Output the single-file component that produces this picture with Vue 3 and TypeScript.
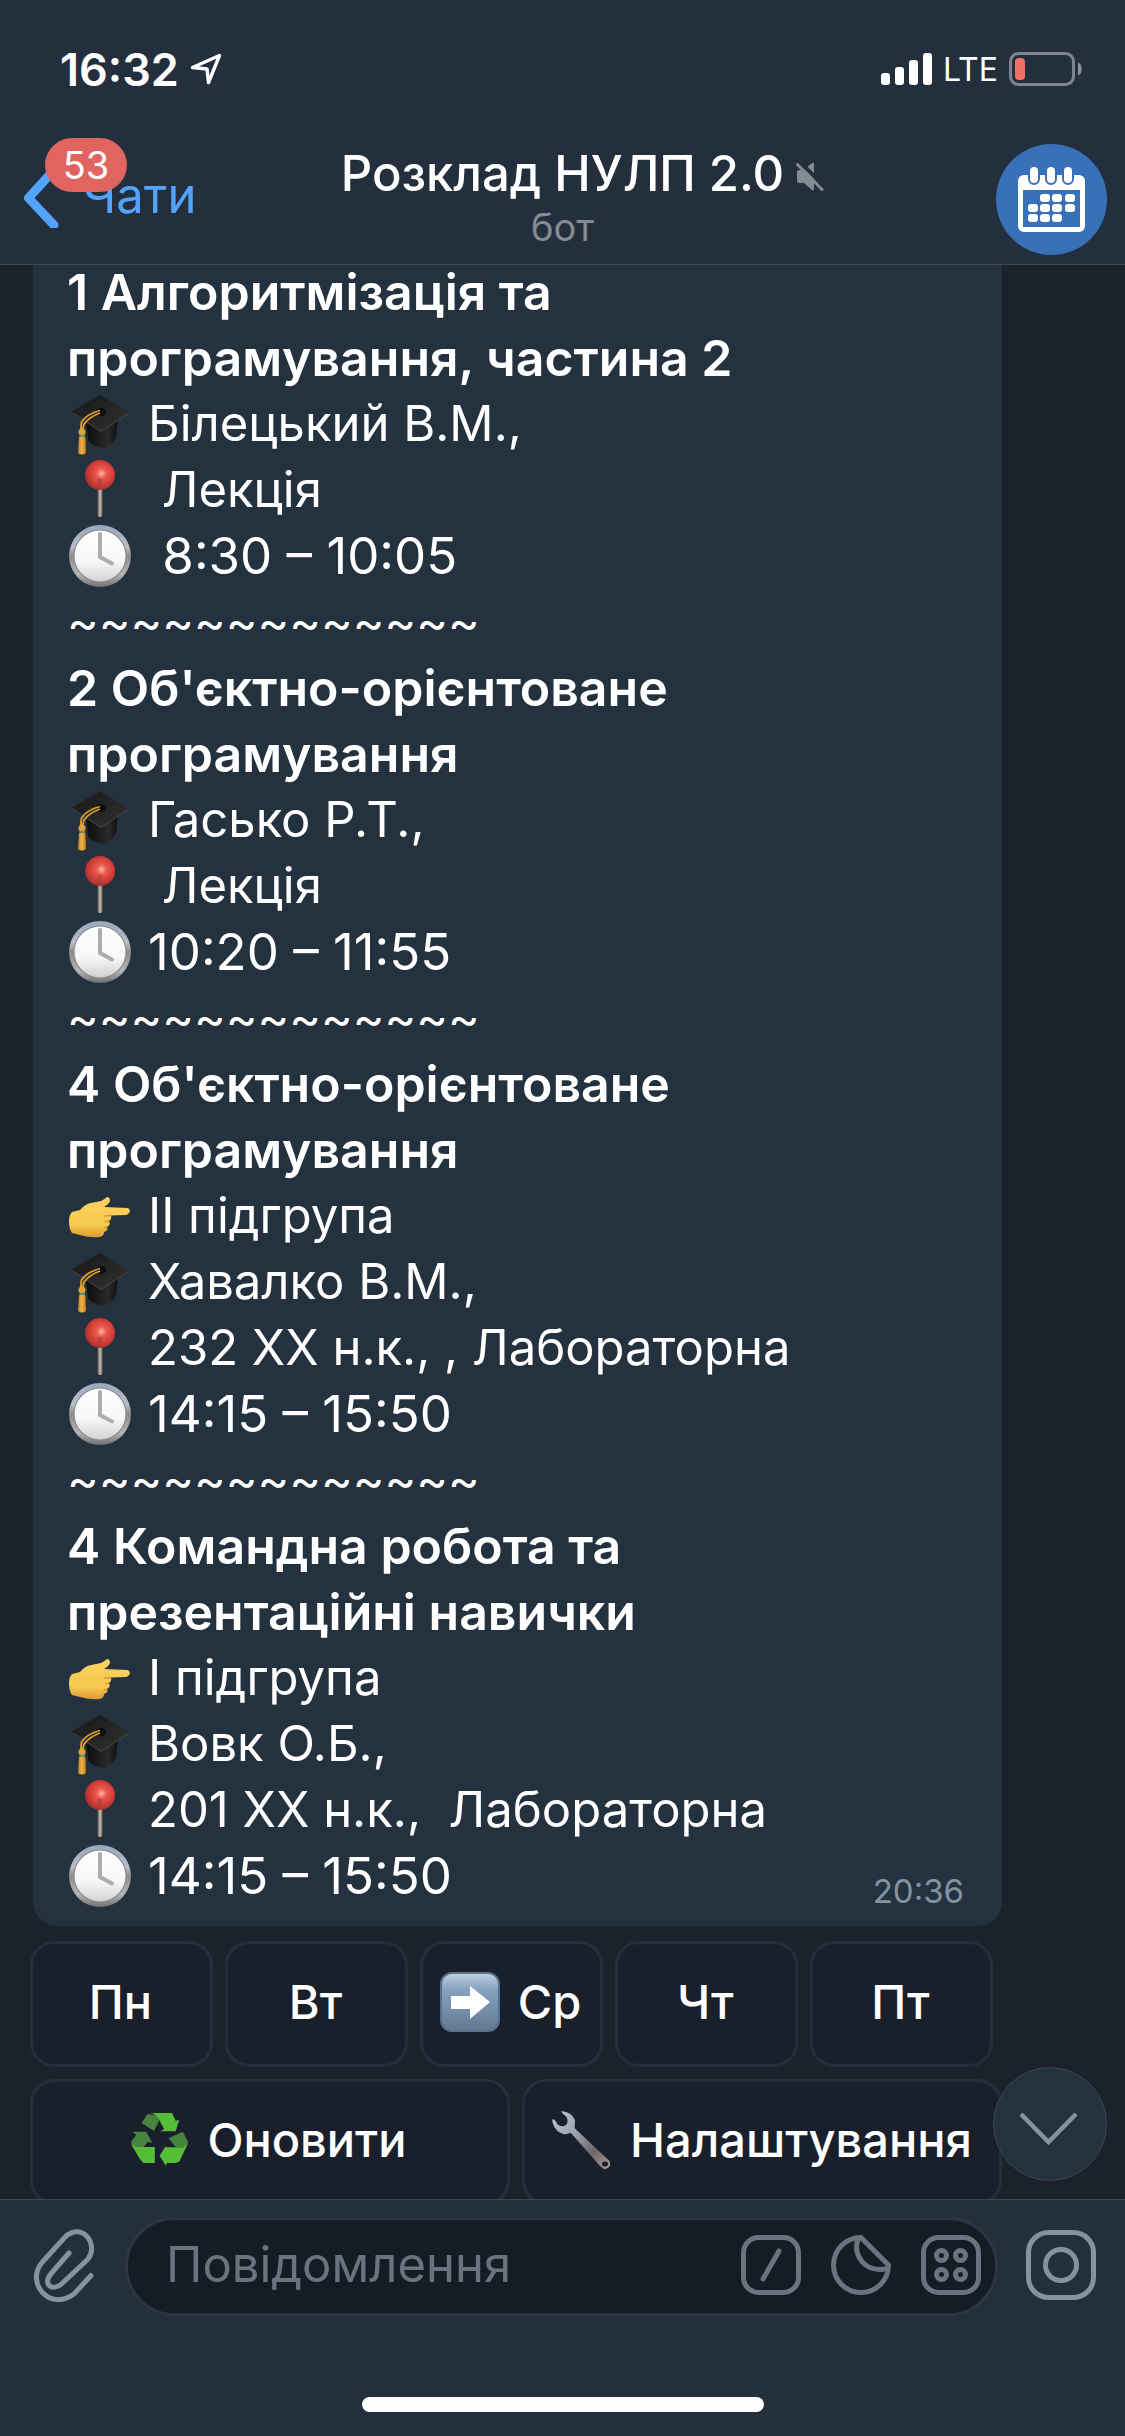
<script setup lang="ts">
import { ref } from 'vue'

type IconName = 'hand' | 'cap' | 'pin' | 'clock'

interface Row {
  icon: IconName
  text: string
}

interface Lesson {
  title: string[]
  rows: Row[]
}

const lessons: Lesson[] = [
  {
    title: ['1 Алгоритмізація та', 'програмування, частина 2'],
    rows: [
      { icon: 'cap', text: 'Білецький В.М.,' },
      { icon: 'pin', text: ' Лекція' },
      { icon: 'clock', text: ' 8:30 – 10:05' },
    ],
  },
  {
    title: ["2 Об'єктно-орієнтоване", 'програмування'],
    rows: [
      { icon: 'cap', text: 'Гасько Р.Т.,' },
      { icon: 'pin', text: ' Лекція' },
      { icon: 'clock', text: '10:20 – 11:55' },
    ],
  },
  {
    title: ["4 Об'єктно-орієнтоване", 'програмування'],
    rows: [
      { icon: 'hand', text: 'ІІ підгрупа' },
      { icon: 'cap', text: 'Хавалко В.М.,' },
      { icon: 'pin', text: '232 ХХ н.к., , Лабораторна' },
      { icon: 'clock', text: '14:15 – 15:50' },
    ],
  },
  {
    title: ['4 Командна робота та', 'презентаційні навички'],
    rows: [
      { icon: 'hand', text: 'І підгрупа' },
      { icon: 'cap', text: 'Вовк О.Б.,' },
      { icon: 'pin', text: '201 ХХ н.к.,  Лабораторна' },
      { icon: 'clock', text: '14:15 – 15:50' },
    ],
  },
]

const separator = '~'.repeat(13)
const days = ['Пн', 'Вт', 'Ср', 'Чт', 'Пт']
const today = ref('Ср')
const draft = ref('')

const calendarCells: [number, number][] = [
  [44, 50], [56, 50], [69, 50],
  [32, 60], [44, 60], [56, 60], [69, 60],
  [32, 70], [44, 70], [56, 70],
]
</script>

<template>
  <div class="screen">
    <svg class="defs" width="0" height="0" aria-hidden="true">
      <defs>
        <linearGradient id="capTop" x1="0" y1="0" x2="1" y2="1">
          <stop offset="0" stop-color="#161616" />
          <stop offset="1" stop-color="#333333" />
        </linearGradient>
        <linearGradient id="capBase" x1="0" y1="0" x2="1" y2="0">
          <stop offset="0" stop-color="#0c0c0c" />
          <stop offset="0.7" stop-color="#2a2a2a" />
          <stop offset="1" stop-color="#0e0e0e" />
        </linearGradient>
        <linearGradient id="tassel" x1="0" y1="0" x2="1" y2="0">
          <stop offset="0" stop-color="#c47e1c" />
          <stop offset="0.5" stop-color="#f0b548" />
          <stop offset="1" stop-color="#bd761a" />
        </linearGradient>
        <radialGradient id="pinBall" cx="0.55" cy="0.45" r="0.55">
          <stop offset="0" stop-color="#ffb6a8" />
          <stop offset="0.3" stop-color="#ea5a50" />
          <stop offset="0.75" stop-color="#cf3a35" />
          <stop offset="1" stop-color="#a8312f" />
        </radialGradient>
        <linearGradient id="pinRod" x1="0" y1="0" x2="1" y2="0">
          <stop offset="0" stop-color="#5d5550" />
          <stop offset="0.5" stop-color="#c9beb5" />
          <stop offset="1" stop-color="#6a605b" />
        </linearGradient>
        <linearGradient id="clockRim" x1="0" y1="0" x2="0" y2="1">
          <stop offset="0" stop-color="#98a6bd" />
          <stop offset="0.35" stop-color="#b9bec6" />
          <stop offset="0.5" stop-color="#8b8b8c" />
          <stop offset="0.8" stop-color="#b5b5b5" />
          <stop offset="1" stop-color="#6c6e72" />
        </linearGradient>
        <linearGradient id="clockFace" x1="0" y1="0" x2="0" y2="1">
          <stop offset="0" stop-color="#ffffff" />
          <stop offset="0.6" stop-color="#f7f7f7" />
          <stop offset="1" stop-color="#d2d2d2" />
        </linearGradient>
        <linearGradient id="skin" x1="0" y1="0" x2="0" y2="1">
          <stop offset="0" stop-color="#fbd45f" />
          <stop offset="0.7" stop-color="#f6c84f" />
          <stop offset="1" stop-color="#dd9a33" />
        </linearGradient>
        <linearGradient id="arrowTile" x1="0" y1="0" x2="0" y2="1">
          <stop offset="0" stop-color="#c3d2e0" />
          <stop offset="0.28" stop-color="#86a3c2" />
          <stop offset="1" stop-color="#63788f" />
        </linearGradient>
        <linearGradient id="steel" x1="0" y1="0" x2="1" y2="1">
          <stop offset="0" stop-color="#b9c4d2" />
          <stop offset="0.4" stop-color="#9aa3b0" />
          <stop offset="0.7" stop-color="#6d6569" />
          <stop offset="1" stop-color="#b09a92" />
        </linearGradient>
      </defs>
    </svg>

    <header class="header">
      <div class="status">
        <div class="status-side">
          <span class="clock-time">16:32</span>
          <svg width="32" height="32" viewBox="0 0 32 32" fill="none" stroke="#fff" stroke-width="3.4" stroke-linejoin="round" aria-hidden="true">
            <path d="M29.5 2.5 2.5 14.500l14.500 1.500 1.500 13.500z" />
          </svg>
        </div>
        <div class="status-side">
          <svg width="51" height="34" viewBox="0 0 51 34" fill="#fff" aria-hidden="true">
            <rect x="0" y="21" width="9" height="12" rx="3" />
            <rect x="14" y="15" width="9" height="18" rx="3" />
            <rect x="28" y="8" width="9" height="25" rx="3" />
            <rect x="42" y="1" width="9" height="32" rx="3" />
          </svg>
          <span class="network">LTE</span>
          <svg width="74" height="34" viewBox="0 0 74 34" aria-hidden="true">
            <rect x="1.500" y="1.500" width="63" height="31" rx="8" fill="none" stroke="#7d848d" stroke-width="3" />
            <rect x="6" y="6" width="10" height="22" rx="4" fill="#ef7067" />
            <path d="M69 10.500c5 1.500 5 11.500 0 13z" fill="#8b9199" />
          </svg>
        </div>
      </div>

      <nav class="nav">
        <a class="back" href="#chats">
          <svg width="38" height="64" viewBox="0 0 38 64" fill="none" stroke="#54a3fa" stroke-width="9" stroke-linecap="round" stroke-linejoin="round" aria-hidden="true">
            <path d="M32 6 6.500 34 32 61" />
          </svg>
          <span class="back-label">Чати</span>
          <span class="badge">53</span>
        </a>
        <div class="heading">
          <h1 class="title">
            Розклад НУЛП 2.0
            <svg class="mute" width="28" height="30" viewBox="0 0 28 30" aria-hidden="true">
              <path d="M1 10q0-2 2-2h5l8-7q2-1 2 1v25q0 2-2 1l-8-7h-5q-2 0-2-2z" fill="#858b93" />
              <path d="M2 -2 31 27" stroke="#242f3d" stroke-width="4" />
              <path d="M1.500 2.500 26 27.500" stroke="#858b93" stroke-width="3" stroke-linecap="round" />
            </svg>
          </h1>
          <p class="subtitle">бот</p>
        </div>
        <button class="avatar" type="button" aria-label="Профіль бота">
          <svg width="111" height="111" viewBox="0 0 111 111" aria-hidden="true">
            <circle cx="55.500" cy="55.500" r="55.500" fill="#3971b8" />
            <rect x="22" y="31" width="67" height="57" rx="6" fill="#fff" />
            <rect x="27" y="46" width="57" height="37" fill="#3971b8" />
            <rect x="33" y="22" width="10" height="18" rx="5" fill="#fff" stroke="#3971b8" stroke-width="2" />
            <rect x="50" y="22" width="10" height="18" rx="5" fill="#fff" stroke="#3971b8" stroke-width="2" />
            <rect x="67" y="22" width="10" height="18" rx="5" fill="#fff" stroke="#3971b8" stroke-width="2" />
            <rect v-for="([x, y], i) in calendarCells" :key="i" :x="x" :y="y" width="10" height="8" rx="3" fill="#fff" />
          </svg>
        </button>
      </nav>
    </header>

    <main class="chat">
      <article class="bubble">
        <section v-for="(lesson, i) in lessons" :key="i">
          <h2 class="lesson-title">
            <span v-for="line in lesson.title" :key="line" class="line">{{ line }}</span>
          </h2>
          <p v-for="(row, j) in lesson.rows" :key="j" class="row" :class="row.icon">
            <svg class="emoji" viewBox="0 0 64 64" aria-hidden="true">
              <template v-if="row.icon === 'cap'">
                <path d="M18 28 20 48Q24 54 34 56 46 52 48 45L50 26z" fill="url(#capBase)" />
                <path d="M3 20 32 3 61 21 33 40z" fill="url(#capTop)" />
                <path d="M3 20 33 39.500 61 21" fill="none" stroke="#484848" stroke-width="1" />
                <ellipse cx="33" cy="20" rx="5" ry="4" fill="#0d0d0d" />
                <path d="M32 18.500Q19 22 13.500 30L12.500 40M32 21Q21 25 16 32L14 40" fill="none" stroke="#dc9f34" stroke-width="1.800" />
                <path d="M11 45 10 61Q14 64 18 61L17.500 45z" fill="url(#tassel)" />
                <circle cx="14" cy="40" r="3.500" fill="#e0a238" />
                <path d="M11.500 44h5.500" stroke="#5a8a86" stroke-width="2" />
              </template>
              <template v-else-if="row.icon === 'pin'">
                <rect x="29.500" y="28" width="5" height="31" rx="2" fill="url(#pinRod)" />
                <circle cx="32" cy="17" r="15" fill="url(#pinBall)" />
                <path d="M29.500 21h5v10h-5z" fill="#a33a38" opacity="0.5" />
              </template>
              <template v-else-if="row.icon === 'clock'">
                <circle cx="32" cy="32" r="31" fill="url(#clockRim)" />
                <circle cx="32" cy="32" r="26.500" fill="#85878a" />
                <circle cx="32" cy="32" r="25.500" fill="url(#clockFace)" />
                <path d="M32 10v23l12 6.500" fill="none" stroke="#abadb0" stroke-width="4" stroke-linecap="round" />
              </template>
              <template v-else>
                <path d="M4 28Q8 27 12 26 17 20 23 19L33 17Q37 15 39 13 42 13 42 17 41 20 36 23L60 24Q62 25 62 27.500 61 30 58 31L43 31.500Q44 35 41 37 43 41 39 43 41 46 36 48 36 52 32 53 22 54 12 51 8 50 4 49 1 45 1 37 1 31 4 28z" fill="url(#skin)" />
                <path d="M43 31.500 36 32M41 37l-4 1M39 43l-3 1" stroke="#d99a35" stroke-width="1.500" fill="none" />
              </template>
            </svg>
            <span class="row-text">{{ row.text }}</span>
          </p>
          <p v-if="i < lessons.length - 1" class="separator">{{ separator }}</p>
        </section>
        <time class="sent">20:36</time>
      </article>

      <div class="keyboard">
        <div class="keys days">
          <button v-for="day in days" :key="day" class="key" type="button" @click="today = day">
            <svg v-if="day === today" width="60" height="60" viewBox="0 0 60 60" aria-hidden="true">
              <rect x="1" y="1" width="58" height="58" rx="11" fill="url(#arrowTile)" stroke="#58718c" stroke-width="2" />
              <path d="M11 24h19V14l20 16-20 17V37H11z" fill="#fff" />
            </svg>
            <span>{{ day }}</span>
          </button>
        </div>
        <div class="keys">
          <button class="key" type="button">
            <svg width="58" height="54" viewBox="0 0 58 54" aria-hidden="true">
              <g fill="#468440">
                <path d="M10.500 10 16.500 1 27 3 28 8 23 18z" />
                <path d="M1.600 18.700H15.200L21.300 30 17 28.700 12.400 34H2L0 29 5.200 22z" />
                <path d="M37.500 25.300 51.800 18.700 57.200 29.300 53.600 34H44.600z" />
              </g>
              <g fill="#56bd39">
                <path d="M17.700 0H41L44.600 7.700 48.200 7 44.600 18.300H29.200L33.200 16 26.700 4.300Q23 0 17.700 0z" />
                <path d="M0 31 4.500 34H23.800V50H12.400L8.800 46z" />
                <path d="M57.200 30 48.200 48.700 44.600 50H35.700L35 53 28.500 42.700 35 32.700V34.300H51.800z" />
              </g>
            </svg>
            <span>Оновити</span>
          </button>
          <button class="key" type="button">
            <svg width="62" height="60" viewBox="0 0 62 60" aria-hidden="true">
              <path d="M11 1Q22 2 25 10L24.700 18.300 59.500 51Q61 55 59 57 56 60 53 58.500L50 56 20.700 22.700 17 24Q10 25 5 18 2 13 2.300 9.300 5 9 7.300 14 10 17 14 16 18 15 17.500 10 17 6 13 4z" fill="url(#steel)" />
              <ellipse cx="55" cy="54" rx="3" ry="2.500" fill="#1a202b" />
            </svg>
            <span>Налаштування</span>
          </button>
        </div>
      </div>

      <button class="scroll-down" type="button" aria-label="Донизу">
        <svg width="60" height="36" viewBox="0 0 60 36" fill="none" stroke="#83939f" stroke-width="4.500" aria-hidden="true">
          <path d="M1 3 28.500 31 56 3" />
        </svg>
      </button>
    </main>

    <footer class="footer">
      <form class="composer" @submit.prevent>
        <button class="tool" type="button" aria-label="Прикріпити">
          <svg width="64" height="74" viewBox="0 0 64 74" fill="none" stroke="#8394a1" stroke-width="5" stroke-linecap="round" aria-hidden="true">
            <path d="M36 25 19 44.500C8 57 20 63.500 28.500 56L55 31C66 17 50-6 33 8L9 34.500C-8 55 17 84 41 66L58 47.500" />
          </svg>
        </button>
        <div class="field">
          <input v-model="draft" class="input" type="text" placeholder="Повідомлення" aria-label="Повідомлення" />
          <button type="button" aria-label="Команди">
            <svg width="60" height="60" viewBox="0 0 60 60" fill="none" stroke="#68757e" stroke-width="5" stroke-linecap="round" aria-hidden="true">
              <rect x="2.500" y="2.500" width="55" height="55" rx="15" />
              <path d="M38 16 22 44" />
            </svg>
          </button>
          <button type="button" aria-label="Наліпки">
            <svg width="60" height="60" viewBox="0 0 60 60" fill="none" stroke="#68757e" stroke-width="5" stroke-linejoin="round" aria-hidden="true">
              <path d="M30 2.500A27.500 27.500 0 1 0 57.500 30z" />
              <path d="M27.500 3C20 20 35 39 56 33.500" />
            </svg>
          </button>
          <button type="button" aria-label="Клавіатура бота">
            <svg width="60" height="60" viewBox="0 0 60 60" fill="none" stroke="#68757e" stroke-width="5" aria-hidden="true">
              <rect x="2.500" y="2.500" width="55" height="55" rx="15" />
              <circle cx="20.500" cy="20.500" r="5" />
              <circle cx="39.500" cy="20.500" r="5" />
              <circle cx="20.500" cy="39.500" r="5" />
              <circle cx="39.500" cy="39.500" r="5" />
            </svg>
          </button>
        </div>
        <button class="tool" type="button" aria-label="Камера">
          <svg width="70" height="70" viewBox="0 0 70 70" fill="none" stroke="#8394a1" stroke-width="5" aria-hidden="true">
            <rect x="2.500" y="2.500" width="65" height="65" rx="20" />
            <circle cx="35" cy="35" r="15.500" />
          </svg>
        </button>
      </form>
      <div class="home-indicator"></div>
    </footer>
  </div>
</template>

<style>
body {
  margin: 0;
  background: #1b222b;
}
</style>

<style scoped>
.screen {
  display: flex;
  flex-direction: column;
  height: 100vh;
  overflow: hidden;
  background: #1b222b;
  color: #fff;
  font-family: Inter, "Noto Sans", sans-serif;
}

.screen *,
.screen {
  box-sizing: border-box;
}

.defs {
  position: absolute;
}

svg {
  display: block;
  flex: none;
}

h1,
h2,
p {
  margin: 0;
}

button {
  padding: 0;
  border: 0;
  background: none;
  color: inherit;
  font: inherit;
}

.header {
  flex: none;
  background: #242f3d;
  border-bottom: 1px solid #3c4651;
}

.status {
  display: flex;
  justify-content: space-between;
  align-items: center;
  height: 138px;
  padding: 0 42px 0 60px;
}

.status-side {
  display: flex;
  align-items: center;
  gap: 11px;
}

.clock-time {
  font-size: 45px;
  font-weight: 600;
}

.network {
  font-size: 32px;
}

.nav {
  display: grid;
  grid-template-columns: 1fr auto 1fr;
  align-items: start;
  height: 126px;
  padding: 0 18px;
}

.back {
  position: relative;
  display: flex;
  align-items: center;
  gap: 22px;
  margin: 26px 0 0 4px;
  color: #54a3fa;
  text-decoration: none;
  justify-self: start;
}

.back-label {
  font-size: 49px;
  line-height: 60px;
}

.badge {
  position: absolute;
  top: -26px;
  left: 23px;
  width: 82px;
  border-radius: 27px;
  background: #e06560;
  color: #fff;
  font-size: 38px;
  line-height: 54px;
  text-align: center;
}

.heading {
  margin-top: 6px;
  text-align: center;
}

.title {
  position: relative;
  font-size: 49px;
  font-weight: 500;
  line-height: 60px;
  white-space: nowrap;
}

.mute {
  position: absolute;
  top: 18px;
  left: calc(100% + 12px);
}

.subtitle {
  color: #858b93;
  font-size: 38px;
  line-height: 46px;
}

.avatar {
  margin-top: 6px;
  justify-self: end;
}

.chat {
  position: relative;
  flex: 1;
  min-height: 0;
  display: flex;
  flex-direction: column;
  justify-content: flex-end;
  gap: 15px;
  padding: 0 123px 0 30px;
  overflow: hidden;
}

.bubble {
  position: relative;
  flex: none;
  margin-left: 3px;
  padding: 17px 34px;
  border-radius: 24px;
  background: #24313e;
  font-size: 49px;
  line-height: 66px;
}

.lesson-title {
  font-size: 50px;
  font-weight: 600;
}

.line {
  display: block;
}

.separator {
  font-size: 48px;
}

.row {
  display: flex;
  align-items: center;
  gap: 16px;
  padding-left: 1px;
}

.clock {
  font-size: 51px;
}

.emoji {
  width: 64px;
  height: 64px;
}

.row-text {
  white-space: pre;
}

.sent {
  position: absolute;
  right: 38px;
  bottom: 15px;
  color: #83939f;
  font-size: 33px;
  line-height: 40px;
}

.keyboard {
  flex: none;
  display: flex;
  flex-direction: column;
  gap: 12px;
  margin-bottom: -6px;
}

.keys {
  display: flex;
  gap: 12px;
}

.days {
  margin-right: 9px;
}

.key {
  flex: 1 1 0;
  display: flex;
  align-items: center;
  justify-content: center;
  gap: 18px;
  min-width: 0;
  height: 126px;
  padding: 0 2px 5px 0;
  border: 3px solid #242f3c;
  border-radius: 24px;
  background: #1a202b;
  font-size: 47px;
  font-weight: 500;
}

.scroll-down {
  position: absolute;
  right: 18px;
  bottom: 18px;
  display: flex;
  align-items: center;
  justify-content: center;
  width: 114px;
  height: 114px;
  padding-top: 10px;
  border: 1px solid #3c4652;
  border-radius: 50%;
  background: #24313e;
}

.footer {
  flex: none;
  height: 237px;
  border-top: 1px solid #3c4651;
  background: #242f3d;
}

.composer {
  display: flex;
  align-items: center;
  gap: 28px;
  padding: 17px 29px 0 33px;
}

.tool {
  margin-bottom: 4px;
}

.field {
  flex: 1;
  display: flex;
  align-items: center;
  gap: 30px;
  height: 99px;
  min-width: 0;
  padding: 0 14px 4px 38px;
  border: 3px solid #2d3542;
  border-radius: 50px;
  background: #161c26;
}

.input {
  flex: 1;
  min-width: 0;
  padding: 0;
  border: 0;
  outline: 0;
  background: none;
  color: #fff;
  font: 49px/66px Inter, "Noto Sans", sans-serif;
}

.input::placeholder {
  color: #68757e;
  opacity: 1;
}

.home-indicator {
  width: 402px;
  height: 15px;
  margin: 81px auto 0;
  border-radius: 8px;
  background: #fff;
}
</style>
